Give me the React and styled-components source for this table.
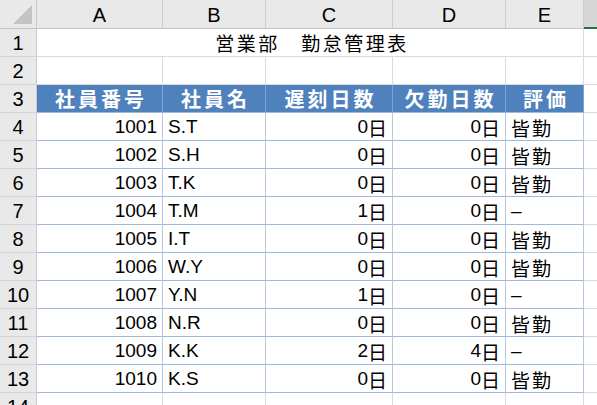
import React from "react";
import styled, { createGlobalStyle } from "styled-components";

const GlobalStyle = createGlobalStyle`
  body {
    margin: 0;
    background: #ffffff;
    font-family: "Liberation Sans", "Noto Sans CJK JP", sans-serif;
    overflow: hidden;
  }
`;

const rows = [
  ["1001", "S.T", 0, 0, "皆勤"],
  ["1002", "S.H", 0, 0, "皆勤"],
  ["1003", "T.K", 0, 0, "皆勤"],
  ["1004", "T.M", 1, 0, "–"],
  ["1005", "I.T", 0, 0, "皆勤"],
  ["1006", "W.Y", 0, 0, "皆勤"],
  ["1007", "Y.N", 1, 0, "–"],
  ["1008", "N.R", 0, 0, "皆勤"],
  ["1009", "K.K", 2, 4, "–"],
  ["1010", "K.S", 0, 0, "皆勤"],
];

const heads = ["社員番号", "社員名", "遅刻日数", "欠勤日数", "評価"];
const letters = ["A", "B", "C", "D", "E"];

export default function App() {
  return (
    <>
      <GlobalStyle />
      <Sheet>
        <Corner>
          <Triangle />
        </Corner>
        {letters.map((l) => (
          <ColHead key={l}>{l}</ColHead>
        ))}
        <ColHead $selected />

        <RowHead>1</RowHead>
        <Title>営業部　勤怠管理表</Title>
        <Cell />

        <RowHead>2</RowHead>
        {letters.map((l) => (
          <Cell key={l} />
        ))}
        <Cell />

        <RowHead>3</RowHead>
        {heads.map((h) => (
          <HeadCell key={h}>{h}</HeadCell>
        ))}
        <Cell />

        {rows.map((r, i) => (
          <React.Fragment key={r[0]}>
            <RowHead>{i + 4}</RowHead>
            <DataCell $align="right">{r[0]}</DataCell>
            <DataCell>{r[1]}</DataCell>
            <DataCell $align="right">
              {r[2]}
              <Jp>日</Jp>
            </DataCell>
            <DataCell $align="right">
              {r[3]}
              <Jp>日</Jp>
            </DataCell>
            <DataCell>
              <Jp>{r[4]}</Jp>
            </DataCell>
            <Cell />
          </React.Fragment>
        ))}

        <RowHead>14</RowHead>
        {letters.map((l) => (
          <Cell key={l} />
        ))}
        <Cell />
      </Sheet>
    </>
  );
}

const Sheet = styled.div`
  display: grid;
  grid-template-columns: 37px 126px 103px 127px 113px 78px 20px;
  grid-template-rows: 29px repeat(14, 28px);
  width: 597px;
  height: 405px;
  overflow: hidden;
  color: #000;
`;

const Corner = styled.div`
  position: relative;
  background: #e9e9e9;
  border-right: 1px solid #c9c9c9;
  border-bottom: 1px solid #c4c4c4;
`;

const Triangle = styled.div`
  position: absolute;
  right: 4px;
  bottom: 4px;
  width: 0;
  height: 0;
  border-left: 19px solid transparent;
  border-bottom: 19px solid #c3c3c3;
`;

const ColHead = styled.div`
  display: flex;
  align-items: center;
  justify-content: center;
  background: ${(p) => (p.$selected ? "#d6d6d6" : "#e9e9e9")};
  border-right: 1px solid #cdcdcd;
  border-bottom: ${(p) => (p.$selected ? "2px solid #217346" : "1px solid #c4c4c4")};
  font-size: 20px;
  padding-top: 3px;
  box-sizing: border-box;
`;

const RowHead = styled.div`
  display: flex;
  align-items: center;
  justify-content: center;
  background: #e9e9e9;
  border-right: 1px solid #c9c9c9;
  border-bottom: 1px solid #d2d2d2;
  font-size: 20px;
  padding-top: 2px;
  box-sizing: border-box;
`;

const Cell = styled.div`
  border-right: 1px solid #dadada;
  border-bottom: 1px solid #dadada;
  box-sizing: border-box;
`;

const Title = styled.div`
  grid-column: span 5;
  display: flex;
  align-items: center;
  justify-content: center;
  padding-left: 4px;
  font-size: 19px;
  letter-spacing: 2.5px;
  border-bottom: 1px solid #dadada;
  border-right: 1px solid #dadada;
  box-sizing: border-box;
`;

const HeadCell = styled.div`
  display: flex;
  align-items: center;
  justify-content: center;
  background: #4f81bd;
  color: #ffffff;
  font-weight: bold;
  font-size: 20px;
  letter-spacing: 3px;
  padding-left: 3px;
  border-right: 1px solid #7fa3d0;
  border-bottom: 1px solid #9fbade;
  box-sizing: border-box;
`;

const DataCell = styled.div`
  display: flex;
  align-items: center;
  justify-content: ${(p) => (p.$align === "right" ? "flex-end" : "flex-start")};
  padding: 1px 5px 0 5px;
  font-size: 19px;
  border-right: 1px solid #b4c7e2;
  border-bottom: 1px solid #9fbade;
  box-sizing: border-box;
  white-space: nowrap;
`;

const Jp = styled.span`
  letter-spacing: 2px;
  margin-right: -2px;
`;
